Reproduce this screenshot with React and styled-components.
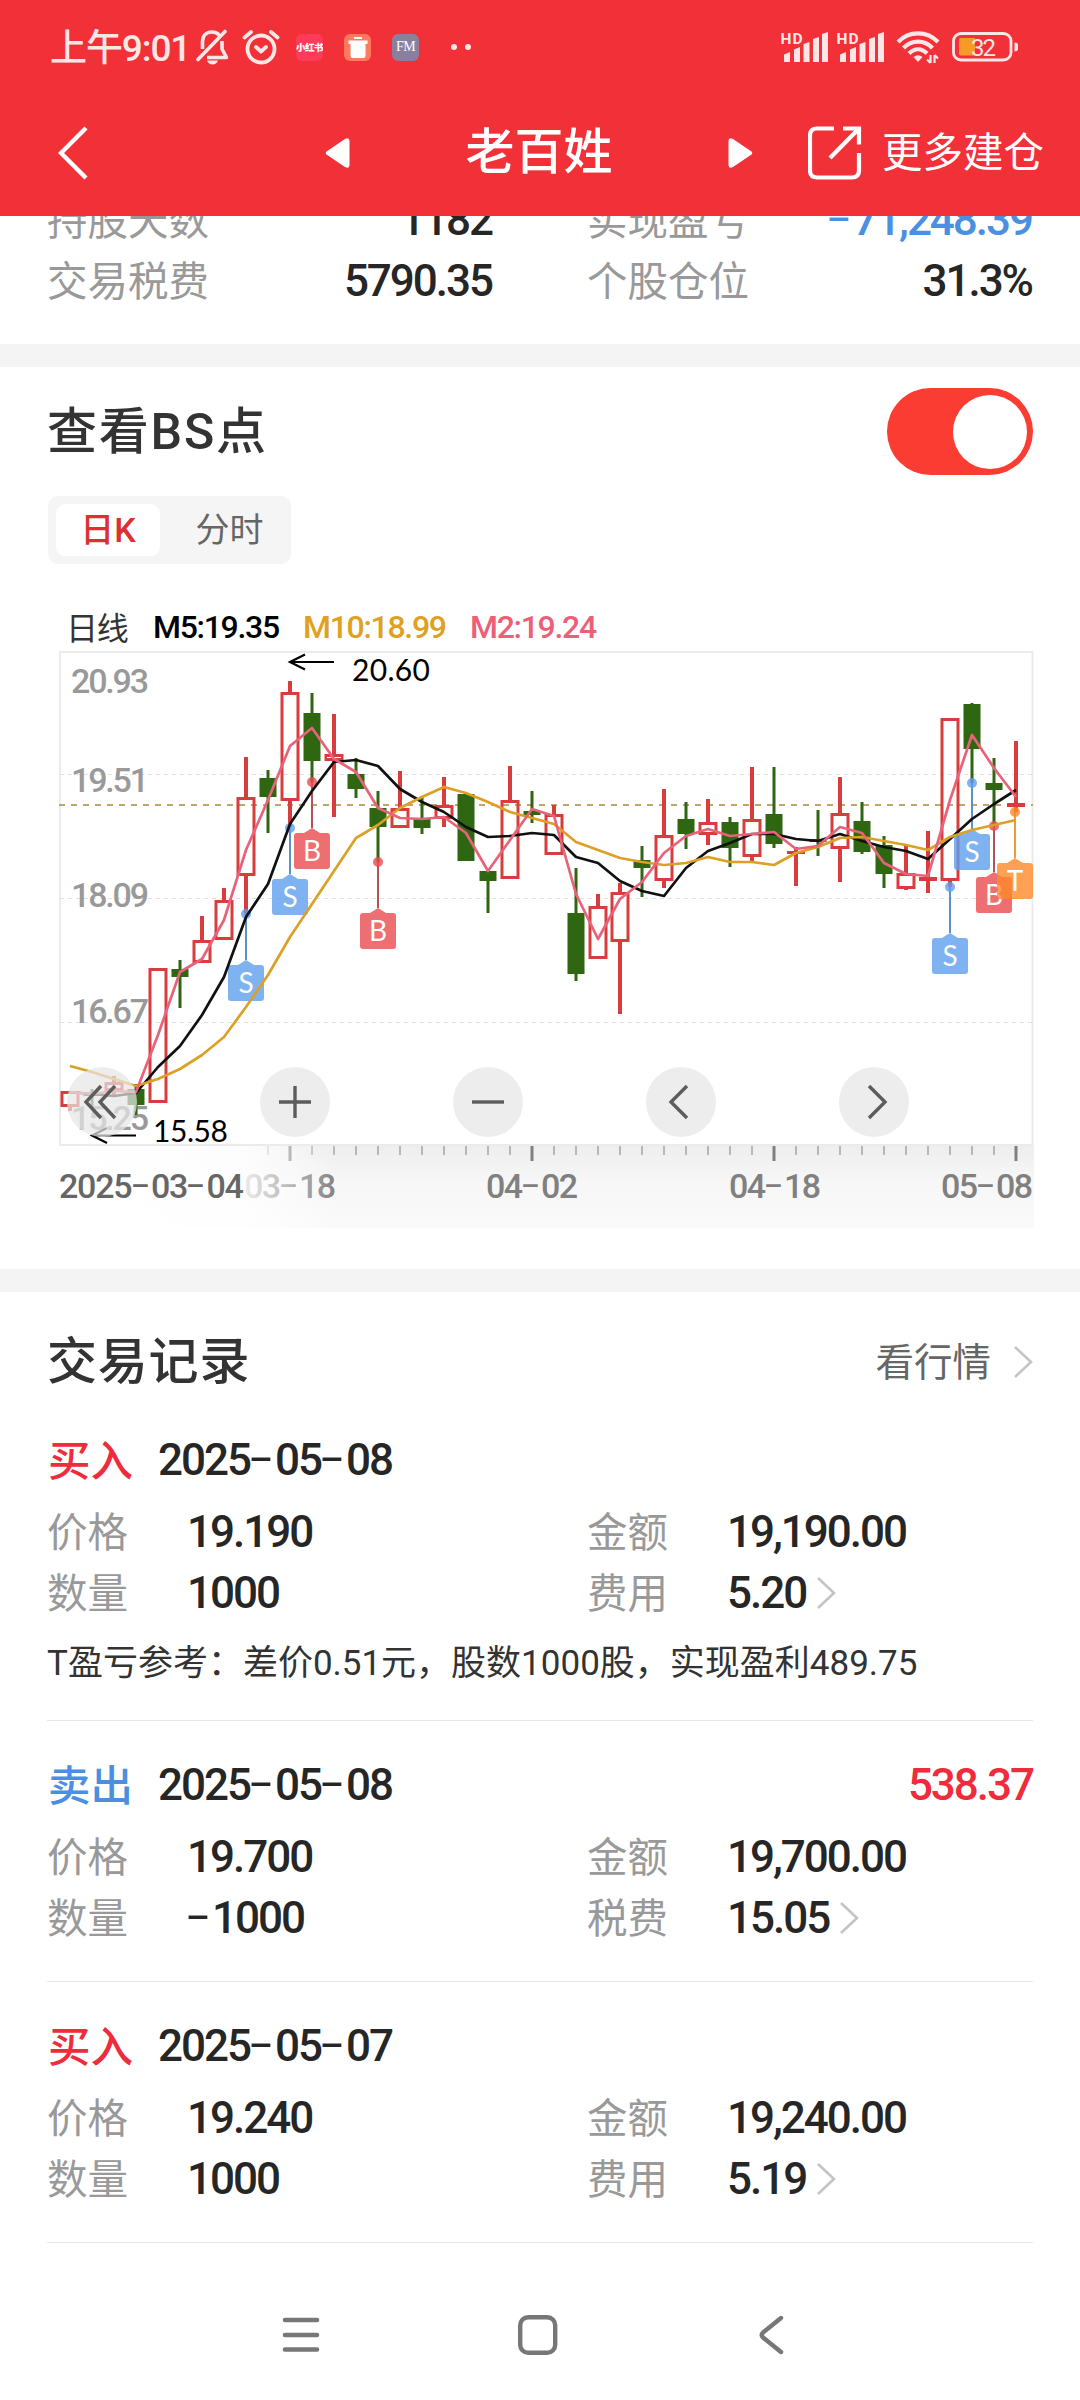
import React, { useState } from 'react';
import styled, { createGlobalStyle } from 'styled-components';

const GlobalStyle = createGlobalStyle`
  * {
    box-sizing: border-box;
  }

  body {
    margin: 0;
    background: #fff;
    font-family: Roboto, 'Noto Sans CJK SC', sans-serif;
    color: #262626;
  }
`;

const Page = styled.div`
  width: 1080px;
  height: 2400px;
  overflow: hidden;
  display: flex;
  flex-direction: column;
  background: #fff;
`;

/* ---------- header ---------- */

const Header = styled.header`
  height: 216px;
  flex: none;
  background: #f23038;
  color: #fff;
  position: relative;
  z-index: 2;
`;

const StatusBar = styled.div`
  height: 94px;
  padding: 0 61px 0 50px;
  display: flex;
  align-items: center;
  color: #ffe6e6;
`;

const Clock = styled.span`
  width: 145px;
  padding-bottom: 5px;
  font-size: 37px;
  font-weight: 500;
  letter-spacing: -1.1px;
  white-space: nowrap;
`;

const StatusIcon = styled.svg`
  flex: none;
  display: block;
  margin-left: ${({ $gap }) => $gap || 0}px;
`;

const AppBadge = styled.span`
  width: 27px;
  height: 27px;
  margin-left: ${({ $gap }) => $gap}px;
  border-radius: 6px;
  background: ${({ $bg }) => $bg};
  color: #fff;
  display: flex;
  align-items: center;
  justify-content: center;
  overflow: hidden;
  white-space: nowrap;
  font-size: ${({ $size }) => $size || 9.5}px;
  font-weight: ${({ $weight }) => $weight || 900};
  font-family: ${({ $serif }) => ($serif ? "'Liberation Serif', serif" : 'inherit')};
  letter-spacing: -0.5px;
`;

const Dots = styled.span`
  display: flex;
  gap: 8px;
  margin-left: 32px;

  i {
    width: 6px;
    height: 6px;
    border-radius: 50%;
    background: #ffe6e6;
  }
`;

const StatusRight = styled.div`
  margin-left: auto;
  display: flex;
  align-items: center;
`;

const NavBar = styled.div`
  height: 118px;
  padding-left: 58px;
  display: flex;
  align-items: center;
`;

const Switcher = styled.div`
  width: 428px;
  margin-left: 237px;
  display: flex;
  align-items: center;
  justify-content: space-between;
`;

const StockName = styled.h1`
  margin: 0;
  font-size: 49px;
  font-weight: 500;
  line-height: 60px;
`;

const MoreButton = styled.div`
  margin-left: 55px;
  display: flex;
  align-items: center;
  gap: 20px;
  font-size: 40.5px;
  line-height: 60px;
  white-space: nowrap;
`;

/* ---------- common ---------- */

const Card = styled.section`
  flex: none;
  padding: 0 47px;
  border-bottom: ${({ $last }) => ($last ? 0 : 23)}px solid #f4f4f4;
`;

const CardTitle = styled.h2`
  margin: 0;
  font-size: 50px;
  font-weight: 500;
  line-height: 60px;
  letter-spacing: ${({ $wide }) => ($wide ? 1.8 : 0.8)}px;
  color: #333;
`;

const NumText = styled.span`
  font-size: ${({ $size }) => $size || 44}px;
  font-weight: 500;
  letter-spacing: ${({ $size }) => ($size || 44) * -0.046}px;
  color: ${({ $color }) => $color || '#262626'};
  white-space: nowrap;
`;

const Dash = styled.span`
  display: inline-block;
  width: 0.57em;
  letter-spacing: 0;
  text-align: center;
  transform: translate(-0.035em, -0.04em) scale(1.65, 0.85);
`;

const Num = ({ children, size, color }) => (
  <NumText $size={size} $color={color}>
    {children.split(/(-)/).map((part, i) => (part === '-' ? <Dash key={i}>-</Dash> : part))}
  </NumText>
);

const Label = styled.span`
  padding-bottom: 5px;
  font-size: 40.5px;
  color: #999;
  white-space: nowrap;
`;

/* ---------- summary ---------- */

const Summary = styled.div`
  height: 155px;
  margin-top: -27px;
  display: grid;
  grid-template-columns: 445px 445px;
  grid-auto-rows: 61px;
  column-gap: 95px;
`;

const SummaryItem = styled.div`
  display: flex;
  align-items: center;
  justify-content: space-between;
`;

/* ---------- chart ---------- */

const ChartHead = styled.div`
  display: flex;
  align-items: center;
  justify-content: space-between;
  padding-top: 21px;
`;

const Toggle = styled.button`
  width: 146px;
  height: 87px;
  padding: 6px;
  border: 0;
  border-radius: 44px;
  background: ${({ $on }) => ($on ? '#fb3c32' : '#ddd')};
  display: flex;
  align-items: center;
  justify-content: ${({ $on }) => ($on ? 'flex-end' : 'flex-start')};

  &::after {
    content: '';
    width: 74px;
    height: 74px;
    border-radius: 50%;
    background: #fff;
  }
`;

const Tabs = styled.div`
  width: 243px;
  height: 68px;
  margin: 21px 0 0 1px;
  padding: 8px 0 8px 8px;
  display: flex;
  border-radius: 10px;
  background: #f5f5f5;
`;

const Tab = styled.button`
  flex: none;
  width: ${({ $active }) => ($active ? 104 : 131)}px;
  height: 52px;
  padding: 0 0 0 ${({ $active }) => ($active ? 0 : 8)}px;
  border: 0;
  border-radius: 9px;
  background: ${({ $active }) => ($active ? '#fff' : 'transparent')};
  color: ${({ $active }) => ($active ? '#dc3032' : '#666')};
  font-family: inherit;
  font-size: 34px;
  font-weight: ${({ $active }) => ($active ? 500 : 400)};
  line-height: 52px;
`;

const Legend = styled.div`
  height: 50px;
  margin-top: 38px;
  padding-left: 19px;
  display: flex;
  align-items: center;
  font-size: 32px;
  font-weight: 500;
  letter-spacing: -1.3px;
  white-space: nowrap;
`;

const LegendItem = styled.span`
  width: ${({ $w }) => $w}px;
  padding-bottom: ${({ $light }) => ($light ? 2 : 0)}px;
  color: ${({ $color }) => $color};
  font-weight: ${({ $light }) => ($light ? 400 : 500)};
`;

const ChartBox = styled.div`
  position: relative;
  width: 975px;
  margin: -1px 0 0 12px;
`;

const Plot = styled.svg`
  display: block;
  overflow: visible;
`;

const Controls = styled.div`
  position: absolute;
  left: 8px;
  top: 416px;
  display: flex;
  gap: 123px;
`;

const Control = styled.button`
  width: 70px;
  height: 70px;
  padding: 0;
  border: 0;
  border-radius: 50%;
  background: rgba(230, 230, 230, 0.72);
  display: flex;
  align-items: center;
  justify-content: center;
`;

const Axis = styled.div`
  position: relative;
  height: 82px;
  margin-bottom: 41px;
  background: linear-gradient(#eeeeee, #f7f7f7 45%, #fafafa);

  &::before {
    content: '';
    position: absolute;
    inset: 0 auto 0 0;
    width: 280px;
    z-index: 1;
    background: linear-gradient(90deg, #fff, rgba(255, 255, 255, 0.85) 66%, rgba(255, 255, 255, 0));
  }
`;

const AxisLabels = styled.div`
  display: grid;
  grid-template-columns: 185px 242px 243px 212px auto;
  line-height: 48px;

  > :first-child {
    position: relative;
    z-index: 2;
    letter-spacing: -1.2px;
  }
`;

/* ---------- records ---------- */

const RecordsHead = styled.div`
  display: flex;
  align-items: center;
  justify-content: space-between;
  height: 60px;
  margin-top: 40px;
`;

const MoreLink = styled.div`
  display: flex;
  align-items: center;
  gap: 22px;
  font-size: 38.5px;
  color: #666;

  span {
    padding-bottom: 7px;
  }
`;

const Record = styled.article`
  padding: ${({ $first }) => ($first ? 40 : 36)}px 0 33px;
  border-bottom: 1px solid #e8e8e8;
`;

const RecordHead = styled.div`
  display: flex;
  align-items: center;
  height: 56px;
  margin-bottom: 13px;
`;

const Side = styled.span`
  width: 111px;
  padding: 0 0 6px 1px;
  font-size: 42.5px;
  font-weight: 500;
  color: ${({ $sell }) => ($sell ? '#4a8fe2' : '#ee2c3c')};
`;

const Profit = styled.span`
  margin-left: auto;
`;

const Fields = styled.div`
  display: grid;
  grid-template-columns: 540px 1fr;
  grid-auto-rows: 61px;
`;

const Field = styled.div`
  display: flex;
  align-items: center;

  ${Label} {
    width: 140px;
  }
`;

const FieldArrow = styled.span`
  display: flex;
  margin-left: 10px;
`;

const Note = styled.p`
  height: 49px;
  margin: 15px 0 0;
  font-size: 35px;
  line-height: 52px;
  color: #333;
  white-space: nowrap;
`;

/* ---------- system navigation ---------- */

const SystemBar = styled.nav`
  height: 130px;
  margin-top: auto;
  padding: 0 295px 0 282px;
  display: flex;
  align-items: center;
  justify-content: space-between;
`;

const HomeIcon = styled.svg`
  margin-right: 3px;
`;

// [colour, high, body top, body bottom, low]
const candles = [
  ['r', 1091, 1091, 1107, 1111],
  ['g', 1089, 1093, 1096, 1107],
  ['r', 1076, 1082, 1091, 1096],
  ['g', 1084, 1089, 1105, 1115],
  ['r', 968, 968, 1103, 1103],
  ['g', 960, 969, 977, 1008],
  ['r', 916, 940, 963, 963],
  ['r', 888, 900, 940, 940],
  ['r', 757, 797, 876, 915],
  ['g', 770, 778, 797, 833],
  ['r', 681, 692, 801, 827],
  ['g', 693, 713, 761, 782],
  ['r', 714, 754, 761, 817],
  ['g', 758, 774, 789, 798],
  ['g', 791, 808, 827, 862],
  ['r', 771, 808, 828, 828],
  ['g', 796, 819, 828, 834],
  ['r', 777, 805, 819, 827],
  ['g', 794, 794, 861, 861],
  ['g', 871, 871, 881, 913],
  ['r', 766, 800, 879, 879],
  ['g', 791, 811, 815, 823],
  ['r', 805, 814, 855, 855],
  ['g', 868, 913, 974, 981],
  ['r', 894, 906, 959, 959],
  ['r', 883, 892, 942, 1014],
  ['g', 846, 860, 868, 897],
  ['r', 789, 835, 881, 888],
  ['g', 802, 819, 834, 849],
  ['r', 799, 822, 835, 845],
  ['g', 817, 822, 848, 867],
  ['r', 767, 819, 857, 863],
  ['g', 767, 814, 844, 848],
  ['r', 847, 851, 854, 886],
  ['g', 810, 839, 842, 856],
  ['r', 777, 813, 849, 882],
  ['g', 802, 821, 852, 854],
  ['g', 836, 845, 874, 888],
  ['r', 846, 873, 889, 890],
  ['r', 831, 877, 881, 893],
  ['r', 718, 718, 881, 887],
  ['g', 703, 704, 749, 783],
  ['g', 758, 783, 790, 826],
  ['r', 741, 803, 807, 812],
];

const m10 = [1066, 1072, 1079, 1086, 1079, 1069, 1055, 1037, 1007, 975, 937, 904, 871, 838, 825, 808, 797, 787, 793, 802, 812, 818, 824, 842, 850, 858, 862, 865, 863, 857, 862, 862, 865, 853, 847, 838, 837, 841, 845, 850, 837, 830, 825, 820];
const m5 = [1092, 1094, 1096, 1093, 1067, 1046, 1015, 977, 917, 884, 824, 791, 762, 760, 766, 789, 802, 812, 827, 837, 836, 833, 835, 857, 863, 881, 891, 896, 868, 851, 843, 834, 834, 839, 841, 834, 841, 847, 851, 859, 839, 819, 804, 790];
const m2 = [1092, 1094, 1091, 1092, 1035, 972, 959, 920, 850, 800, 746, 728, 759, 772, 808, 818, 819, 817, 833, 871, 840, 809, 816, 894, 939, 899, 882, 853, 836, 829, 836, 834, 832, 849, 846, 827, 833, 863, 874, 876, 800, 735, 768, 797];

const markers = [
  { x: 246, dot: 914, box: 965, type: 'S' },
  { x: 290, dot: 828, box: 879, type: 'S' },
  { x: 312, dot: 782, box: 833, type: 'B' },
  { x: 378, dot: 862, box: 913, type: 'B' },
  { x: 950, dot: 887, box: 938, type: 'S' },
  { x: 972, dot: 783, box: 834, type: 'S' },
  { x: 994, dot: 826, box: 877, type: 'B' },
  { x: 1015, dot: 812, box: 863, type: 'T' },
];

const markerColors = {
  S: { fill: '#5e9fee', line: '#5b93c4' },
  B: { fill: '#ea4c4e', line: '#b4525a' },
  T: { fill: '#ff8a2b', line: '#f0993c' },
};

const candleX = (i) => 70 + i * 22;
const toPoints = (values) => values.map((y, i) => `${candleX(i)},${y}`).join(' ');

const Candle = ({ x, data }) => {
  const [kind, high, top, bottom, low] = data;
  if (kind === 'g') {
    return (
      <g fill="#2f6612">
        <rect x={x - 1.5} y={high} width="3" height={low - high} />
        <rect x={x - 8.5} y={top} width="17" height={bottom - top} />
      </g>
    );
  }
  return (
    <g fill="#d93c3c">
      <rect x={x - 2} y={high} width="4" height={top - high} />
      <rect x={x - 2} y={bottom} width="4" height={low - bottom} />
      {bottom - top < 6 ? (
        <rect x={x - 9} y={top} width="18" height={bottom - top} />
      ) : (
        <rect x={x - 8} y={top + 1.5} width="16" height={bottom - top - 3} fill="none" stroke="#d93c3c" strokeWidth="3" />
      )}
    </g>
  );
};

const Marker = ({ x, dot, box, type }) => {
  const { fill, line } = markerColors[type];
  return (
    <g>
      <line x1={x} y1={dot} x2={x} y2={box - 5} stroke={line} strokeWidth="2" />
      <g fill={fill} opacity="0.8">
        <circle cx={x} cy={dot} r="5" />
        <path d={`M${x - 8} ${box}L${x} ${box - 5}L${x + 8} ${box}Z`} />
        <rect x={x - 18} y={box} width="36" height="36" rx="3" />
      </g>
      <text x={x} y={box + 28} textAnchor="middle" fontFamily="Lato" fontSize="28" fill="#fff">
        {type}
      </text>
    </g>
  );
};

const priceLabels = [
  ['20.93', 692.5],
  ['19.51', 792],
  ['18.09', 907],
  ['16.67', 1023],
  ['15.25', 1130],
];

const KLine = () => (
  <Plot width="975" height="495" viewBox="59 651 975 495">
    <rect x="60" y="652" width="972.5" height="493" fill="none" stroke="#ebebeb" strokeWidth="2" />
    {[774.5, 898.5, 1022.5].map((y) => (
      <line key={y} x1="60" x2="1032" y1={y} y2={y} stroke="#e0e0e0" strokeWidth="1.2" strokeDasharray="4 4" />
    ))}
    <line x1="59" x2="1033" y1="805" y2="805" stroke="#c4a56c" strokeWidth="2" strokeDasharray="6 6" />
    {priceLabels.map(([text, y]) => (
      <text key={text} x="71" y={y} fontSize="34" fontWeight="500" fill="#999" textLength="78">
        {text}
      </text>
    ))}
    {candles.map((c, i) => (
      <Candle key={i} x={candleX(i)} data={c} />
    ))}
    {markers.map((m) => (
      <Marker key={m.x} {...m} />
    ))}
    <g fill="none" strokeWidth="2.7" strokeLinejoin="round">
      <polyline points={toPoints(m5)} stroke="#111" />
      <polyline points={toPoints(m10)} stroke="#dca024" />
      <polyline points={toPoints(m2)} stroke="#e8637a" />
    </g>
    <g fill="none" stroke="#000" strokeWidth="2.2">
      <path d="M334 662H290M305 654.500L290 662L305 669.500" />
      <path d="M136 1135.500H92M107 1128L92 1135.500L107 1143" />
    </g>
    <g fontFamily="Lato" fontSize="30" fill="#000">
      <text x="352" y="681" textLength="78">20.60</text>
      <text x="153" y="1142" textLength="75">15.58</text>
    </g>
  </Plot>
);

const Ticks = () => (
  <Plot width="975" height="16" viewBox="59 0 975 16">
    {candles.map((_, i) => {
      if (i < 9) return null;
      const major = (i - 10) % 11 === 0;
      return (
        <rect
          key={i}
          x={candleX(i) - (major ? 1.5 : 0.5)}
          y="0"
          width={major ? 3 : 1}
          height={major ? 15 : 9}
          fill="#808080"
        />
      );
    })}
  </Plot>
);

const controlPaths = [
  'M34 19L19 35L34 51M48 19L33 35L48 51',
  'M19 35H51M35 19V51',
  'M19 35H51',
  'M41 19L25 35L41 51',
  'M30 19L46 35L30 51',
];

const Chevron = () => (
  <svg width="20" height="34" viewBox="0 0 20 34" fill="none" stroke="#c4c4c4" strokeWidth="2.6">
    <path d="M2 2L18 17L2 32" />
  </svg>
);

const Signal = ({ gap }) => (
  <StatusIcon $gap={gap} width="48" height="32" viewBox="0 0 48 32" fill="currentColor">
    <text x="-0.500" y="12.500" fontSize="15.5" fontWeight="700" textLength="22">HD</text>
    <path d="M3 23.500L9 21V31H3ZM13 18.500L19 16V31H13ZM22.500 13L28.500 11V31H22.500ZM32 8L38 6V31H32ZM41 3L47 1V31H41Z" />
  </StatusIcon>
);

const records = [
  {
    date: '2025-05-08',
    price: '19.190',
    amount: '19,190.00',
    count: '1000',
    feeLabel: '费用',
    fee: '5.20',
    note: 'T盈亏参考：差价0.51元，股数1000股，实现盈利489.75',
  },
  {
    sell: true,
    date: '2025-05-08',
    profit: '538.37',
    price: '19.700',
    amount: '19,700.00',
    count: '-1000',
    feeLabel: '税费',
    fee: '15.05',
  },
  {
    date: '2025-05-07',
    price: '19.240',
    amount: '19,240.00',
    count: '1000',
    feeLabel: '费用',
    fee: '5.19',
  },
];

const App = () => {
  const [showPoints, setShowPoints] = useState(true);
  const [tab, setTab] = useState('day');

  return (
    <Page>
      <GlobalStyle />
      <Header>
        <StatusBar>
          <Clock>上午9:01</Clock>
          <StatusIcon width="35" height="36" viewBox="0 0 35 36" fill="none" stroke="currentColor" strokeWidth="3.6" strokeLinejoin="round">
            <path d="M7.500 20V13C7.500 6.500 11.500 3 17 3C20.500 3 23 4.500 24.500 6.500M27 12V20L31.500 28.500H12" />
            <path d="M30 2.500L3 30.500" strokeLinecap="round" />
            <path d="M12 31.500H23Q21.500 35.500 17.500 35.500T12 31.500Z" fill="currentColor" stroke="none" />
          </StatusIcon>
          <StatusIcon $gap={12} width="38" height="36" viewBox="0 0 38 36" fill="none" stroke="currentColor" strokeWidth="3.8" strokeLinecap="round" strokeLinejoin="round">
            <circle cx="19" cy="20" r="13.500" />
            <path d="M2.500 8.500L9 3M35.500 8.500L29 3M14 18L19 22.500L24 18" />
          </StatusIcon>
          <AppBadge $gap={16} $bg="#ff3b5c">小红书</AppBadge>
          <AppBadge $gap={21} $bg="#ff7a5c">
            <svg width="20" height="21" viewBox="0 0 20 21" fill="#fff">
              <path d="M6 0H14V2H6ZM0.500 3.500H19.500V7H0.500ZM2.500 7H17.500V19Q17.500 21 15.500 21H4.500Q2.500 21 2.500 19Z" />
            </svg>
          </AppBadge>
          <AppBadge $gap={21} $bg="#8a7f9c" $size={14} $weight={400} $serif>FM</AppBadge>
          <Dots>
            <i />
            <i />
          </Dots>
          <StatusRight>
            <Signal />
            <Signal gap={8} />
            <StatusIcon $gap={11} width="44" height="34" viewBox="0 0 44 34" fill="none" stroke="currentColor" strokeWidth="4.200">
              <path d="M2 12C13 0.500 31 0.500 42 12M7.500 18C15.500 9.500 28.500 9.500 36.500 18M13 23.500C18.500 18 25.500 18 31 23.500" />
              <path d="M17.500 27Q22 23.500 26.500 27L22 32Z" fill="currentColor" stroke="none" />
              <path d="M34.500 25V33M34.500 33L31 29.500M38.500 33V25M38.500 25L42 28.500" strokeWidth="2.200" />
            </StatusIcon>
            <StatusIcon $gap={12} width="67" height="30" viewBox="0 0 67 30">
              <rect x="1.500" y="1.500" width="57.500" height="26.500" rx="7.500" fill="none" stroke="currentColor" strokeWidth="2.800" />
              <path d="M9 6H23V23.500H9Q7 23.500 7 21.500V8Q7 6 9 6Z" fill="#f79a28" />
              <path d="M62.500 10.500Q66 10.500 66 13V17Q66 19.500 62.500 19.500Z" fill="currentColor" />
              <text x="19" y="23.500" fontSize="24" fill="currentColor" textLength="25">32</text>
            </StatusIcon>
          </StatusRight>
        </StatusBar>
        <NavBar>
          <svg width="30" height="54" viewBox="0 0 30 54" fill="none" stroke="#fff" strokeWidth="4.400">
            <path d="M28 2L3 27L28 52" />
          </svg>
          <Switcher>
            <svg width="25" height="30" viewBox="0 0 25 30" fill="#fff">
              <path d="M1.500 13.500L20 1Q24.500 -1 24.500 3V27Q24.500 31 20 29L1.500 16.500Q0 15 1.500 13.500Z" />
            </svg>
            <StockName>老百姓</StockName>
            <svg width="25" height="30" viewBox="0 0 25 30" fill="#fff">
              <path d="M23.500 13.500L5 1Q0.500 -1 0.500 3V27Q0.500 31 5 29L23.500 16.500Q25 15 23.500 13.500Z" />
            </svg>
          </Switcher>
          <MoreButton>
            <svg width="54" height="54" viewBox="0 0 54 54" fill="none" stroke="#fff" strokeWidth="4.200">
              <path d="M26 2.500H9Q2 2.500 2 9.500V44.500Q2 51.500 9 51.500H44Q51 51.500 51 44.500V27" />
              <path d="M35 2.500H51V18.500M50 3.500L22 32" />
            </svg>
            更多建仓
          </MoreButton>
        </NavBar>
      </Header>

      <Card>
        <Summary>
          <SummaryItem>
            <Label>持股天数</Label>
            <Num>1182</Num>
          </SummaryItem>
          <SummaryItem>
            <Label>实现盈亏</Label>
            <Num color="#4a8fe2">-71,248.39</Num>
          </SummaryItem>
          <SummaryItem>
            <Label>交易税费</Label>
            <Num>5790.35</Num>
          </SummaryItem>
          <SummaryItem>
            <Label>个股仓位</Label>
            <Num>31.3%</Num>
          </SummaryItem>
        </Summary>
      </Card>

      <Card>
        <ChartHead>
          <CardTitle $wide>查看BS点</CardTitle>
          <Toggle $on={showPoints} onClick={() => setShowPoints(!showPoints)} />
        </ChartHead>
        <Tabs>
          <Tab $active={tab === 'day'} onClick={() => setTab('day')}>日K</Tab>
          <Tab $active={tab === 'minute'} onClick={() => setTab('minute')}>分时</Tab>
        </Tabs>
        <Legend>
          <LegendItem $w={87} $color="#333" $light>日线</LegendItem>
          <LegendItem $w={150} $color="#000">M5:19.35</LegendItem>
          <LegendItem $w={167} $color="#e0a020">M10:18.99</LegendItem>
          <LegendItem $w={130} $color="#ec5f76">M2:19.24</LegendItem>
        </Legend>
        <ChartBox>
          <KLine />
          <Controls>
            {controlPaths.map((d) => (
              <Control key={d}>
                <svg width="70" height="70" viewBox="0 0 70 70" fill="none" stroke="#5c5c5c" strokeWidth="3.4">
                  <path d={d} />
                </svg>
              </Control>
            ))}
          </Controls>
          <Axis>
            <Ticks />
            <AxisLabels>
              <Num size={34} color="#666">2025-03-04</Num>
              <Num size={34} color="#808080">03-18</Num>
              <Num size={34} color="#808080">04-02</Num>
              <Num size={34} color="#808080">04-18</Num>
              <Num size={34} color="#808080">05-08</Num>
            </AxisLabels>
          </Axis>
        </ChartBox>
      </Card>

      <Card $last>
        <RecordsHead>
          <CardTitle>交易记录</CardTitle>
          <MoreLink>
            <span>看行情</span>
            <Chevron />
          </MoreLink>
        </RecordsHead>
        {records.map((r, i) => (
          <Record key={i} $first={i === 0}>
            <RecordHead>
              <Side $sell={r.sell}>{r.sell ? '卖出' : '买入'}</Side>
              <Num>{r.date}</Num>
              {r.profit && (
                <Profit>
                  <Num color="#ee2c3c">{r.profit}</Num>
                </Profit>
              )}
            </RecordHead>
            <Fields>
              <Field>
                <Label>价格</Label>
                <Num>{r.price}</Num>
              </Field>
              <Field>
                <Label>金额</Label>
                <Num>{r.amount}</Num>
              </Field>
              <Field>
                <Label>数量</Label>
                <Num>{r.count}</Num>
              </Field>
              <Field>
                <Label>{r.feeLabel}</Label>
                <Num>{r.fee}</Num>
                <FieldArrow>
                  <Chevron />
                </FieldArrow>
              </Field>
            </Fields>
            {r.note && <Note>{r.note}</Note>}
          </Record>
        ))}
      </Card>

      <SystemBar>
        <svg width="38" height="40" viewBox="0 0 38 40" stroke="#777" strokeWidth="4.600" strokeLinecap="round">
          <path d="M3 5H35M3 20H35M3 34.500H35" />
        </svg>
        <HomeIcon width="40" height="40" viewBox="0 0 40 40" fill="none" stroke="#777" strokeWidth="4.400">
          <rect x="2.200" y="2.200" width="35" height="35.600" rx="8" />
        </HomeIcon>
        <svg width="27" height="40" viewBox="0 0 27 40" fill="none" stroke="#777" strokeWidth="4.400" strokeLinecap="round">
          <path d="M23 3L5 17.500Q2.500 20 5 22.500L23 37" />
        </svg>
      </SystemBar>
    </Page>
  );
};

export default App;
